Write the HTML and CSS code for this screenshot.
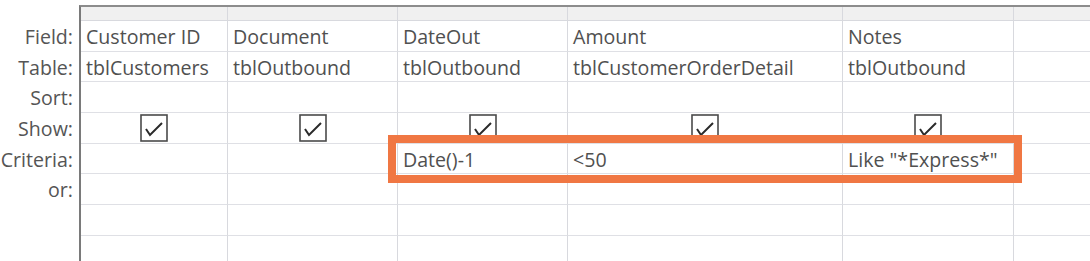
FILE: index.html
```html
<!DOCTYPE html>
<html>
<head>
<meta charset="utf-8">
<link rel="stylesheet" href="styles.css">
</head>
<body>
<div class="page">
  <div class="labels">
    <div class="lbl">Field:</div>
    <div class="lbl">Table:</div>
    <div class="lbl">Sort:</div>
    <div class="lbl">Show:</div>
    <div class="lbl">Criteria:</div>
    <div class="lbl">or:</div>
  </div>
  <div class="grid">
    <div class="hd"></div><div class="hd"></div><div class="hd"></div><div class="hd"></div><div class="hd"></div><div class="hd last"></div>

    <div class="c">Customer ID</div><div class="c">Document</div><div class="c">DateOut</div><div class="c">Amount</div><div class="c">Notes</div><div class="c last"></div>

    <div class="c">tblCustomers</div><div class="c">tblOutbound</div><div class="c">tblOutbound</div><div class="c">tblCustomerOrderDetail</div><div class="c">tblOutbound</div><div class="c last"></div>

    <div class="c"></div><div class="c"></div><div class="c"></div><div class="c"></div><div class="c"></div><div class="c last"></div>

    <div class="c chk"><svg width="28" height="28" viewBox="0 0 28 28"><rect x="1" y="1" width="26" height="26" fill="#fff" stroke="#4a4a4a" stroke-width="1.6"/><polyline points="6,15 10,21 22,9" fill="none" stroke="#2a2a2a" stroke-width="2"/></svg></div>
    <div class="c chk"><svg width="28" height="28" viewBox="0 0 28 28"><rect x="1" y="1" width="26" height="26" fill="#fff" stroke="#4a4a4a" stroke-width="1.6"/><polyline points="6,15 10,21 22,9" fill="none" stroke="#2a2a2a" stroke-width="2"/></svg></div>
    <div class="c chk"><svg width="28" height="28" viewBox="0 0 28 28"><rect x="1" y="1" width="26" height="26" fill="#fff" stroke="#4a4a4a" stroke-width="1.6"/><polyline points="6,15 10,21 22,9" fill="none" stroke="#2a2a2a" stroke-width="2"/></svg></div>
    <div class="c chk"><svg width="28" height="28" viewBox="0 0 28 28"><rect x="1" y="1" width="26" height="26" fill="#fff" stroke="#4a4a4a" stroke-width="1.6"/><polyline points="6,15 10,21 22,9" fill="none" stroke="#2a2a2a" stroke-width="2"/></svg></div>
    <div class="c chk"><svg width="28" height="28" viewBox="0 0 28 28"><rect x="1" y="1" width="26" height="26" fill="#fff" stroke="#4a4a4a" stroke-width="1.6"/><polyline points="6,15 10,21 22,9" fill="none" stroke="#2a2a2a" stroke-width="2"/></svg></div>
    <div class="c last"></div>

    <div class="c"></div><div class="c"></div><div class="c">Date()-1</div><div class="c">&lt;50</div><div class="c">Like "*Express*"</div><div class="c last"></div>

    <div class="c"></div><div class="c"></div><div class="c"></div><div class="c"></div><div class="c"></div><div class="c last"></div>
    <div class="c"></div><div class="c"></div><div class="c"></div><div class="c"></div><div class="c"></div><div class="c last"></div>
    <div class="c"></div><div class="c"></div><div class="c"></div><div class="c"></div><div class="c"></div><div class="c last"></div>
  </div>
  <div class="highlight"></div>
</div>
</body>
</html>
```

FILE: styles.css
```css
html, body {
  margin: 0;
  padding: 0;
  background: #ffffff;
  overflow: hidden;
}
.page {
  position: relative;
  display: flex;
  width: 1090px;
  height: 261px;
  padding-top: 5px;
  box-sizing: border-box;
  font-family: "Open Sans", "Noto Sans", sans-serif;
  font-size: 19.6px;
  color: #505050;
}
.labels {
  width: 79px;
  flex: none;
  padding-top: 16px;
  box-sizing: border-box;
}
.lbl {
  height: 30.7px;
  line-height: 31px;
  text-align: right;
  padding-right: 6px;
  color: #555555;
  white-space: nowrap;
}
.grid {
  flex: 1;
  display: grid;
  grid-template-columns: 147px 170px 170px 275px 171px 1fr;
  grid-template-rows: 14px repeat(8, 30.7px);
  border-top: 2px solid #8c8c8c;
  border-left: 2px solid #7a7a7a;
  align-content: start;
}
.hd {
  background: #f0f0f0;
  border-right: 1px solid #d8d9de;
  border-bottom: 1px solid #d8d9de;
}
.c {
  border-right: 1px solid #d8d9de;
  border-bottom: 1px solid #dfe0e5;
  padding-left: 5px;
  line-height: 31px;
  white-space: nowrap;
  overflow: hidden;
}
.last {
  border-right: none;
}
.chk {
  display: flex;
  justify-content: center;
  align-items: flex-start;
  padding-left: 0;
  padding-top: 1px;
  overflow: visible;
}
.chk svg {
  display: block;
}
.highlight {
  position: absolute;
  left: 388px;
  top: 135px;
  width: 634px;
  height: 48px;
  border: 8px solid #f07743;
  box-sizing: border-box;
  pointer-events: none;
}
```
